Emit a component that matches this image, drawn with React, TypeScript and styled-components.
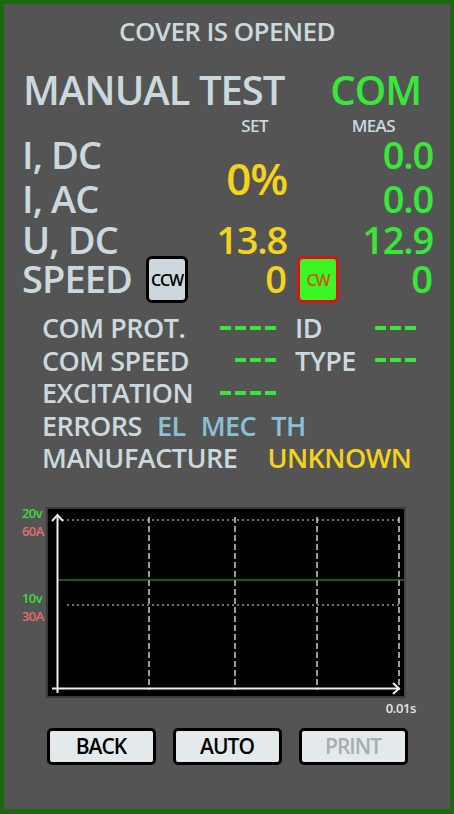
import React from "react";
import styled, { createGlobalStyle } from "styled-components";

const Global = createGlobalStyle`
  html, body { margin: 0; padding: 0; background: #545454; }
  * { box-sizing: border-box; }
`;

const FONT = `"Open Sans", "Noto Sans", sans-serif`;
const LABEL = "#cbd9de";
const GREEN = "#38e838";
const YELLOW = "#f4d31c";

const Frame = styled.div`
  width: 454px;
  height: 814px;
  border: 4px solid #1b6a10;
  border-bottom-width: 5px;
  background: #545454;
  font-family: ${FONT};
  color: ${LABEL};
  display: flex;
  flex-direction: column;
  padding-top: 13px;
`;

const Title = styled.div`
  font-size: 26px;
  line-height: 28px;
  font-weight: 600;
  text-align: center;
  letter-spacing: -0.6px;
`;

const Header = styled.div`
  display: flex;
  justify-content: space-between;
  align-items: flex-start;
  margin-top: 25px;
  padding: 0 29px 0 19px;
  font-size: 40px;
  line-height: 40px;
  font-weight: 600;
  letter-spacing: -1px;
`;

const HeaderCom = styled.span`
  color: ${GREEN};
`;

const ColHeads = styled.div`
  display: grid;
  grid-template-columns: 260px 142px;
  margin-left: 4px;
  font-size: 17px;
  line-height: 12px;
  height: 12px;
  margin-top: 10px;
  font-weight: 600;
  letter-spacing: -0.6px;
`;

const ColHead = styled.div<{ $end: number }>`
  text-align: right;
  padding-right: ${(p) => p.$end}px;
`;

const Readings = styled.div`
  display: grid;
  grid-template-columns: 123px 142px 146px;
  grid-template-rows: 44px 44px 38px 40px;
  padding-left: 18px;
  font-size: 38px;
  font-weight: 600;
`;

const Label = styled.div<{ $row: number }>`
  grid-column: 1;
  grid-row: ${(p) => p.$row};
  line-height: 32px;
  align-self: center;
  white-space: nowrap;
  letter-spacing: -0.9px;
`;

const SetVal = styled.div<{ $row: number; $span?: number; $big?: boolean }>`
  grid-column: 2;
  grid-row: ${(p) => p.$row} / span ${(p) => p.$span ?? 1};
  align-self: center;
  justify-self: end;
  color: ${YELLOW};
  font-size: ${(p) => (p.$big ? "44px" : "38px")};
  line-height: ${(p) => (p.$big ? "36px" : "32px")};
  margin-top: ${(p) => (p.$big ? "4px" : "0")};
  letter-spacing: -1.2px;
`;

const MeasVal = styled.div<{ $row: number }>`
  grid-column: 3;
  grid-row: ${(p) => p.$row};
  align-self: center;
  justify-self: end;
  color: ${GREEN};
  line-height: 32px;
  letter-spacing: -1.2px;
`;

const SpeedCell = styled.div<{ $col: number }>`
  grid-column: ${(p) => p.$col};
  grid-row: 4;
  display: flex;
  align-items: center;
  justify-content: space-between;
  padding-left: ${(p) => (p.$col === 2 ? "1px" : "10px")};
  line-height: 32px;
`;

const DirButton = styled.div<{ $active?: boolean }>`
  width: 42px;
  height: 47px;
  border-radius: 6px;
  border: 3px solid ${(p) => (p.$active ? "#d8141a" : "#000")};
  background: ${(p) => (p.$active ? "#3cf524" : "#cbd9de")};
  color: ${(p) => (p.$active ? "#c45d10" : "#000")};
  font-size: 16px;
  font-weight: 600;
  display: flex;
  align-items: center;
  justify-content: center;
  letter-spacing: -1.2px;
  margin-top: 3px;
`;

const SpeedSet = styled.span`
  color: ${YELLOW};
`;

const SpeedMeas = styled.span`
  color: ${GREEN};
`;

const Info = styled.div`
  display: grid;
  grid-template-columns: 234px 121px;
  column-gap: 19px;
  margin-top: 14px;
  padding-left: 38px;
  font-size: 27px;
  line-height: 32.5px;
  font-weight: 600;
`;

const Field = styled.div`
  display: flex;
  justify-content: space-between;
  align-items: center;
  white-space: nowrap;
  letter-spacing: -0.5px;
`;

const Wide = styled.div`
  grid-column: 1 / span 2;
  display: flex;
  align-items: center;
  white-space: nowrap;
  letter-spacing: -0.5px;
`;

const DashRow = styled.span`
  display: inline-flex;
  gap: 3.5px;
  margin-top: -1px;
`;

const Dash = styled.span`
  width: 11.5px;
  height: 4px;
  background: ${GREEN};
`;

const ErrTag = styled.span`
  color: #8cc0d4;
  margin-left: 15px;
`;

const Unknown = styled.span`
  color: ${YELLOW};
  margin-left: 30px;
`;

const ChartArea = styled.div`
  display: flex;
  margin-top: 32px;
  padding-left: 18px;
`;

const AxisLabels = styled.div`
  width: 24px;
  display: flex;
  flex-direction: column;
  font-size: 13px;
  font-weight: 600;
  line-height: 18px;
  letter-spacing: -0.6px;
  margin-top: -3px;
`;

const AxisLabel = styled.div<{ $c: string; $gap?: number }>`
  color: ${(p) => p.$c};
  margin-top: ${(p) => p.$gap ?? 0}px;
  height: 18px;
`;

const ChartBox = styled.div`
  width: 360px;
  height: 191px;
  background: #000;
  border: 2px solid #3a3a3a;
  border-right-color: #444;
`;

const TimeLabel = styled.div`
  font-size: 13px;
  font-weight: 600;
  line-height: 14px;
  color: #e4e4e4;
  text-align: right;
  padding-right: 34px;
  margin-top: 3px;
  letter-spacing: -0.4px;
`;

const Buttons = styled.div`
  display: flex;
  justify-content: center;
  gap: 17px;
  margin-top: 13px;
`;

const Btn = styled.div<{ $disabled?: boolean }>`
  width: 109px;
  height: 37px;
  border: 3px solid #000;
  border-radius: 5px;
  background: #e4eaec;
  color: ${(p) => (p.$disabled ? "#a9adae" : "#000")};
  font-size: 21px;
  font-weight: 600;
  display: flex;
  align-items: center;
  justify-content: center;
  letter-spacing: -1px;
`;

const Dashes = ({ n }: { n: number }) => (
  <DashRow>
    {Array.from({ length: n }).map((_, i) => (
      <Dash key={i} />
    ))}
  </DashRow>
);

const Chart = () => (
  <svg width="356" height="187" viewBox="0 0 356 187" style={{ display: "block" }}>
    <line x1="9" y1="11" x2="351" y2="11" stroke="#ddd" strokeWidth="1" strokeDasharray="2 3" />
    <line x1="19" y1="96" x2="351" y2="96" stroke="#ddd" strokeWidth="1" strokeDasharray="2 3" />
    {[101, 187, 269, 351].map((x) => (
      <line key={x} x1={x} y1="8" x2={x} y2="181" stroke="#eee" strokeWidth="1.3" strokeDasharray="6 3" />
    ))}
    <line x1="9" y1="71" x2="356" y2="71" stroke="#2fae2f" strokeWidth="1.2" />
    <line x1="9.5" y1="6" x2="9.5" y2="184" stroke="#eee" strokeWidth="2" />
    <polyline points="4,12 9.5,6 15,12" fill="none" stroke="#eee" strokeWidth="2" />
    <line x1="4" y1="179.5" x2="351" y2="179.5" stroke="#eee" strokeWidth="2" />
    <polyline points="345,174 351,179.5 345,185" fill="none" stroke="#eee" strokeWidth="2" />
  </svg>
);

export default function App() {
  return (
    <>
      <Global />
      <Frame>
        <Title>COVER IS OPENED</Title>
        <Header>
          <span>MANUAL TEST</span>
          <HeaderCom>COM</HeaderCom>
        </Header>
        <ColHeads>
          <ColHead $end={0}>SET</ColHead>
          <ColHead $end={15}>MEAS</ColHead>
        </ColHeads>
        <Readings>
          <Label $row={1}>I, DC</Label>
          <Label $row={2}>I, AC</Label>
          <Label $row={3}>U, DC</Label>
          <Label $row={4}>SPEED</Label>
          <SetVal $row={1} $span={2} $big>
            0%
          </SetVal>
          <SetVal $row={3}>13.8</SetVal>
          <MeasVal $row={1}>0.0</MeasVal>
          <MeasVal $row={2}>0.0</MeasVal>
          <MeasVal $row={3}>12.9</MeasVal>
          <SpeedCell $col={2}>
            <DirButton>CCW</DirButton>
            <SpeedSet>0</SpeedSet>
          </SpeedCell>
          <SpeedCell $col={3}>
            <DirButton $active>CW</DirButton>
            <SpeedMeas>0</SpeedMeas>
          </SpeedCell>
        </Readings>
        <Info>
          <Field>
            <span>COM PROT.</span>
            <Dashes n={4} />
          </Field>
          <Field>
            <span>ID</span>
            <Dashes n={3} />
          </Field>
          <Field>
            <span>COM SPEED</span>
            <Dashes n={3} />
          </Field>
          <Field>
            <span>TYPE</span>
            <Dashes n={3} />
          </Field>
          <Field>
            <span>EXCITATION</span>
            <Dashes n={4} />
          </Field>
          <div />
          <Wide>
            <span>ERRORS</span>
            <ErrTag>EL</ErrTag>
            <ErrTag>MEC</ErrTag>
            <ErrTag>TH</ErrTag>
          </Wide>
          <Wide>
            <span>MANUFACTURE</span>
            <Unknown>UNKNOWN</Unknown>
          </Wide>
        </Info>
        <ChartArea>
          <AxisLabels>
            <AxisLabel $c="#3cdc3c">20v</AxisLabel>
            <AxisLabel $c="#e07070">60A</AxisLabel>
            <AxisLabel $c="#3cdc3c" $gap={49}>10v</AxisLabel>
            <AxisLabel $c="#e07070">30A</AxisLabel>
          </AxisLabels>
          <ChartBox>
            <Chart />
          </ChartBox>
        </ChartArea>
        <TimeLabel>0.01s</TimeLabel>
        <Buttons>
          <Btn>BACK</Btn>
          <Btn>AUTO</Btn>
          <Btn $disabled>PRINT</Btn>
        </Buttons>
      </Frame>
    </>
  );
}
